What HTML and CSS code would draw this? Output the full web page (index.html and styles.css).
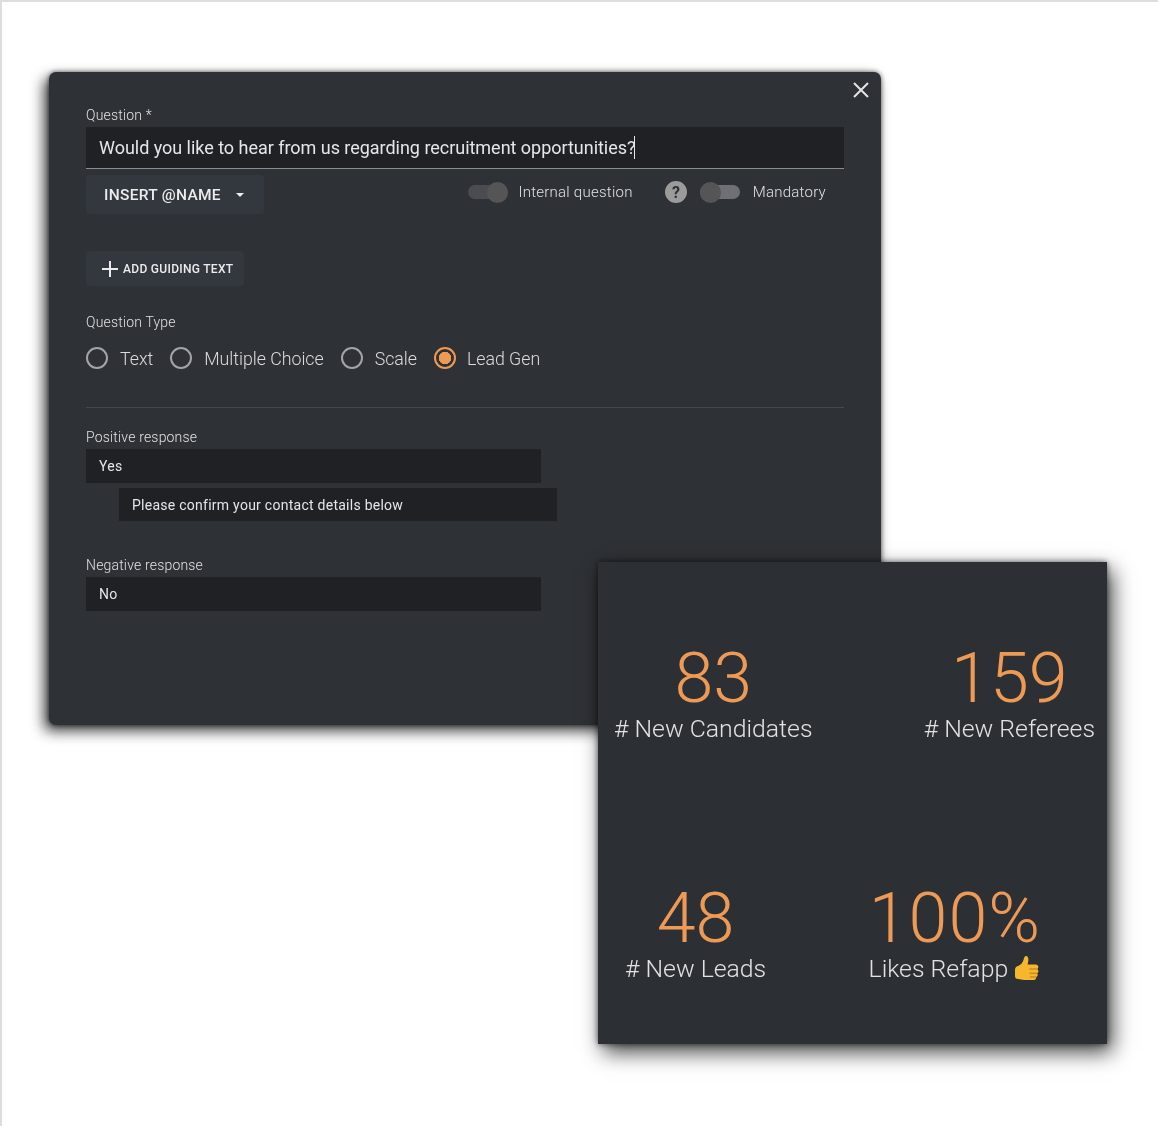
FILE: index.html
```html
<!DOCTYPE html>
<html lang="en">

<head>
  <meta charset="utf-8">
  <meta name="viewport" content="width=device-width, initial-scale=1.0">
  <title>Question editor</title>
  <link rel="stylesheet" href="styles.css">
</head>

<body>
  <div class="page">
    <section class="dialog">
      <button class="close" type="button" aria-label="Close">
        <svg width="16" height="16" viewBox="0 0 16 16"><path d="M1 1L15 15M15 1L1 15" /></svg>
      </button>

      <label class="field-label">Question *</label>
      <div class="question-input"><span>Would you like to hear from us regarding recruitment opportunities?</span><i class="caret"></i></div>

      <div class="toolbar">
        <button class="btn btn-insert" type="button">INSERT @NAME <i class="arrow"></i></button>
        <div class="toggles">
          <div class="toggle toggle-on"><i class="knob"></i></div>
          <span class="toggle-label">Internal question</span>
          <svg class="help" width="22" height="22" viewBox="0 0 22 22">
            <circle cx="11" cy="11" r="11" />
            <text x="11" y="16.500" text-anchor="middle">?</text>
          </svg>
          <div class="toggle toggle-off"><i class="knob"></i></div>
          <span class="toggle-label toggle-label-last">Mandatory</span>
        </div>
      </div>

      <button class="btn btn-guiding" type="button">
        <svg width="16" height="16" viewBox="0 0 16 16"><path d="M8 0V16M0 8H16" /></svg>
        ADD GUIDING TEXT
      </button>

      <label class="field-label type-label">Question Type</label>
      <div class="radios">
        <div class="radio"><i class="dot"></i>Text</div>
        <div class="radio"><i class="dot"></i>Multiple Choice</div>
        <div class="radio"><i class="dot"></i>Scale</div>
        <div class="radio radio-on"><i class="dot"></i>Lead Gen</div>
      </div>

      <hr class="divider">

      <label class="field-label">Positive response</label>
      <div class="text-input">Yes</div>
      <div class="text-input text-input-sub">Please confirm your contact details below</div>

      <label class="field-label negative-label">Negative response</label>
      <div class="text-input">No</div>
    </section>

    <section class="stats">
      <div class="stat-row stat-row-top">
        <div class="stat">
          <div class="stat-num">83</div>
          <div class="stat-name"># New Candidates</div>
        </div>
        <div class="stat">
          <div class="stat-num">159</div>
          <div class="stat-name"># New Referees</div>
        </div>
      </div>
      <div class="stat-row stat-row-bottom">
        <div class="stat">
          <div class="stat-num">48</div>
          <div class="stat-name"># New Leads</div>
        </div>
        <div class="stat">
          <div class="stat-num stat-num-wide">100%</div>
          <div class="stat-name">Likes Refapp
            <svg class="thumb" width="25" height="26" viewBox="0 0 25 26">
              <path fill="#f6b62e" d="M1 14.500C1 12.500 2.500 11.500 4.500 10.800C7 9.800 8.800 7.500 9.500 5C10 3 10.500 1 12 1C13.800 1 14.800 3 14.300 6L13.600 9.500H21.500C23.300 9.500 24.300 10.500 24.300 12C24.300 13 23.800 13.700 23.200 14C24 14.500 24.400 15.200 24.400 16.200C24.400 17.200 23.800 17.900 23.100 18.200C23.700 18.700 23.900 19.500 23.700 20.300C23.500 21.200 22.900 21.800 22.200 22C22.500 23.500 21.600 25 19.800 25H10.500C7.500 25 6.500 24 4 24C2 24 1 23 1 21Z" />
              <path fill="none" stroke="#b97a17" stroke-width="1" d="M15.500 14H23M15.500 18.200H23M16 22H22" />
            </svg>
          </div>
        </div>
      </div>
    </section>
  </div>
</body>

</html>
```

FILE: styles.css
```css
body,
html {
  margin: 0;
  padding: 0;
  height: 100%;
  font-family: "Roboto", sans-serif;
  background-color: #ffffff;
}

.page {
  position: relative;
  height: 1124px;
  border-top: 2px solid #dddddd;
  border-left: 2px solid #dddddd;
  overflow: hidden;
}

button {
  font-family: inherit;
  border: none;
  cursor: pointer;
}

/* question dialog */
.dialog {
  position: relative;
  box-sizing: border-box;
  width: 832px;
  height: 653px;
  margin: 70px 0 0 47px;
  padding: 33px 37px 0;
  background-color: #2e3135;
  border-radius: 7px;
  box-shadow: 0 0 5px rgba(0, 0, 0, 0.6), -5px 6px 14px rgba(0, 0, 0, 0.75);
  filter: blur(0.4px);
}

.close {
  position: absolute;
  top: 10px;
  right: 12px;
  padding: 0;
  background: none;
  line-height: 0;
}

.close path {
  stroke: #e4e4e4;
  stroke-width: 2;
  fill: none;
}

.field-label {
  display: block;
  height: 22px;
  font-size: 14px;
  font-weight: 300;
  line-height: 20px;
  letter-spacing: 0.18px;
  color: #e2e2e2;
}

.question-input {
  display: flex;
  align-items: center;
  box-sizing: border-box;
  height: 42px;
  padding: 0 0 0 13px;
  background-color: #202124;
  border-bottom: 1px solid #8b8c8e;
  font-size: 18px;
  letter-spacing: -0.03px;
  color: #e6e6e6;
}

.caret {
  width: 1px;
  height: 23px;
  margin-left: -1px;
  background-color: #e6e6e6;
}

.toolbar {
  display: flex;
  justify-content: space-between;
  margin-top: 6px;
}

.btn {
  display: flex;
  align-items: center;
  background-color: #33373e;
  border-radius: 4px;
  color: #ececec;
  font-weight: 500;
}

.btn-insert {
  width: 178px;
  height: 39px;
  padding: 0 0 0 18px;
  font-size: 15.500px;
  letter-spacing: 0.3px;
}

.arrow {
  width: 0;
  height: 0;
  margin-left: 15px;
  border-top: 4px solid #ececec;
  border-left: 4px solid transparent;
  border-right: 4px solid transparent;
}

.toggles {
  display: flex;
  align-items: center;
  height: 34px;
  padding-right: 18px;
}

.toggle {
  position: relative;
  width: 40px;
  height: 14px;
  border-radius: 7px;
}

.toggle-on {
  background-color: #4a4c50;
}

.toggle-off {
  background-color: #6e7075;
}

.knob {
  position: absolute;
  top: -3px;
  width: 21px;
  height: 21px;
  border-radius: 50%;
  background-color: #555555;
}

.toggle-on .knob {
  right: 0;
}

.toggle-off .knob {
  left: 0;
}

.toggle-label {
  margin-left: 10px;
  font-size: 15px;
  font-weight: 300;
  letter-spacing: 0.25px;
  color: #e2e2e2;
}

.toggle-label-last {
  margin-left: 13px;
}

.help {
  margin: 0 13px 0 32px;
}

.help circle {
  fill: #9b9b9b;
}

.help text {
  font-size: 16px;
  font-weight: 700;
  fill: #2e3136;
}

.btn-guiding {
  gap: 5px;
  width: 158px;
  height: 35px;
  margin-top: 37px;
  padding: 0 0 0 16px;
  font-size: 12px;
  letter-spacing: 0.3px;
}

.btn-guiding path {
  stroke: #ececec;
  stroke-width: 2;
  fill: none;
}

.type-label {
  margin-top: 26px;
}

.radios {
  display: flex;
  gap: 17px;
  margin-top: 13px;
}

.radio {
  display: flex;
  align-items: center;
  gap: 12px;
  height: 22px;
  font-size: 17.800px;
  letter-spacing: -0.03px;
  font-weight: 300;
  color: #dcdcdc;
}

.radio-on {
  gap: 11px;
}

.dot {
  box-sizing: border-box;
  width: 22px;
  height: 22px;
  border: 2px solid #a3a4a6;
  border-radius: 50%;
}

.radio-on .dot {
  border-color: #ee9a55;
  background: radial-gradient(circle, #ee9a55 0 6px, transparent 6.500px);
}

.divider {
  height: 1px;
  margin: 38px 0 19px;
  border: none;
  background-color: #45484c;
}

.text-input {
  box-sizing: border-box;
  width: 455px;
  height: 34px;
  padding-left: 13px;
  background-color: #202124;
  font-size: 14px;
  line-height: 34px;
  letter-spacing: 0.26px;
  color: #e6e6e6;
}

.text-input-sub {
  width: 438px;
  height: 33px;
  margin: 5px 0 0 33px;
  line-height: 35px;
}

.negative-label {
  margin-top: 34px;
}

/* stats card */
.stats {
  position: absolute;
  left: 596px;
  top: 560px;
  width: 509px;
  height: 482px;
  background-color: #2c2f34;
  box-shadow: 0 0 6px rgba(0, 0, 0, 0.55), 5px 8px 20px rgba(0, 0, 0, 0.75);
  filter: blur(0.6px);
}

.stat-row {
  display: flex;
  justify-content: space-between;
  height: 240px;
}

.stat-row-top {
  padding: 0 12px 0 16px;
}

.stat-row-bottom {
  padding: 0 66px 0 27px;
}

.stat {
  text-align: center;
  color: #e2e2e2;
}

.stat-num {
  margin-top: 79px;
  height: 74px;
  font-size: 70px;
  font-weight: 300;
  line-height: 74px;
  color: #ee9a55;
}

.stat-num-wide {
  padding-left: 2px;
  letter-spacing: 1px;
}

.stat-name {
  font-size: 24.800px;
  font-weight: 300;
  line-height: 28px;
}

.thumb {
  vertical-align: -4px;
}
```
